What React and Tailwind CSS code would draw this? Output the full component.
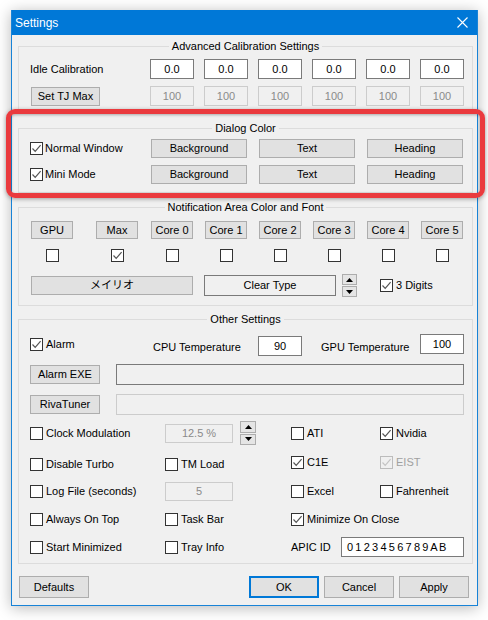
import React from "react";

const font = { fontFamily: '"Liberation Sans", "Noto Sans CJK JP", Arial, sans-serif' };

const Check = ({ checked, disabled }) => (
  <span
    className={`flex h-[13px] w-[13px] shrink-0 items-center justify-center border ${
      disabled ? "border-[#bcbcbc] bg-[#f0f0f0]" : "border-[#333333] bg-white"
    }`}
  >
    {checked && (
      <svg width="11" height="11" viewBox="0 0 11 11">
        <path
          d="M1.5 5.5 L4.2 8.3 L9.6 2.2"
          fill="none"
          stroke={disabled ? "#c4c4c4" : "#555555"}
          strokeWidth="1.2"
        />
      </svg>
    )}
  </span>
);

const CheckLabel = ({ label, checked, disabled, gap = "gap-[3px]" }) => (
  <div className={`flex items-center ${gap}`}>
    <Check checked={checked} disabled={disabled} />
    <span className={disabled ? "text-[#a0a0a0]" : "text-black"}>{label}</span>
  </div>
);

const Btn = ({ children, className = "" }) => (
  <div
    className={`flex items-center justify-center border border-[#adadad] bg-[#e1e1e1] text-black ${className}`}
  >
    {children}
  </div>
);

const Field = ({ children, className = "", disabled }) => (
  <div
    className={`flex items-center justify-center border ${
      disabled
        ? "border-[#cccccc] bg-[#f0f0f0] text-[#8a8a8a]"
        : "border-[#7a7a7a] bg-white text-black"
    } ${className}`}
  >
    {children}
  </div>
);

const Spinner = ({ className = "" }) => (
  <div className={`flex flex-col gap-px ${className}`}>
    <div className="flex flex-1 items-center justify-center border border-[#adadad] bg-[#e5e5e5]">
      <svg width="7" height="4" viewBox="0 0 7 4">
        <path d="M0 4 L3.5 0 L7 4 Z" fill="#000" />
      </svg>
    </div>
    <div className="flex flex-1 items-center justify-center border border-[#adadad] bg-[#e5e5e5]">
      <svg width="7" height="4" viewBox="0 0 7 4">
        <path d="M0 0 L3.5 4 L7 0 Z" fill="#000" />
      </svg>
    </div>
  </div>
);

const Group = ({ title, className = "", children }) => (
  <fieldset
    className={`ml-[6px] w-[455px] border border-[#dcdcdc] ${className}`}
  >
    <legend className="mx-auto px-[3px] leading-[14px] text-black">{title}</legend>
    {children}
  </fieldset>
);

export default function App() {
  const cores = ["Core 0", "Core 1", "Core 2", "Core 3", "Core 4", "Core 5"];
  const boxes = [false, true, false, false, false, false, false, false];

  return (
    <div className="min-h-screen bg-white pl-[11px] pt-[10px] text-[11px]" style={font}>
      <div className="relative h-[596px] w-[467px] border border-[#1883d7] bg-[#f0f0f0] shadow-[0_2px_14px_rgba(0,0,0,0.28)]">
        {/* title bar */}
        <div className="flex h-[25px] items-center justify-between bg-[#0078d7] pl-[3px] pr-[9px] -mt-px">
          <span className="text-[12px] text-white">Settings</span>
          <svg width="11" height="11" viewBox="0 0 11 11">
            <path d="M0.5 0.5 L10.5 10.5 M10.5 0.5 L0.5 10.5" stroke="#fff" strokeWidth="1.1" />
          </svg>
        </div>

        {/* Advanced Calibration Settings */}
        <Group title="Advanced Calibration Settings" className="mt-[4px] h-[75px]">
          <div className="mt-[6px] flex items-center pl-[11px]">
            <span className="w-[120px]">Idle Calibration</span>
            <div className="flex gap-[10px]">
              {[0, 1, 2, 3, 4, 5].map((i) => (
                <Field key={i} className="h-[20px] w-[44px]">
                  0.0
                </Field>
              ))}
            </div>
          </div>
          <div className="mt-[7px] flex items-center pl-[12px]">
            <Btn className="h-[19px] w-[69px]">Set TJ Max</Btn>
            <div className="ml-[50px] flex gap-[10px]">
              {[0, 1, 2, 3, 4, 5].map((i) => (
                <Field key={i} disabled className="h-[20px] w-[44px]">
                  100
                </Field>
              ))}
            </div>
          </div>
        </Group>

        {/* Dialog Color */}
        <Group title="Dialog Color" className="mt-[7px] h-[72px]">
          {["Normal Window", "Mini Mode"].map((label, r) => (
            <div
              key={label}
              className={`flex items-center pl-[11px] ${r === 0 ? "mt-[4px]" : "mt-[7px]"}`}
            >
              <div className="w-[121px]">
                <CheckLabel label={label} checked gap="gap-[2px]" />
              </div>
              <div className="flex gap-[12px]">
                <Btn className="h-[19px] w-[96px]">Background</Btn>
                <Btn className="h-[19px] w-[96px]">Text</Btn>
                <Btn className="h-[19px] w-[96px]">Heading</Btn>
              </div>
            </div>
          ))}
        </Group>

        {/* Notification Area */}
        <Group title="Notification Area Color and Font" className="mt-[7px] h-[106px]">
          <div className="mt-[7px] flex pl-[12px]">
            <Btn className="h-[18px] w-[42px]">GPU</Btn>
            <Btn className="ml-[23px] h-[18px] w-[42px]">Max</Btn>
            <div className="ml-[13px] flex gap-[12px]">
              {cores.map((c) => (
                <Btn key={c} className="h-[18px] w-[42px]">
                  {c}
                </Btn>
              ))}
            </div>
          </div>
          <div className="mt-[10px] flex pl-[12px]">
            {boxes.map((b, i) => (
              <div
                key={i}
                className={`flex w-[42px] justify-center ${
                  i === 1 ? "ml-[23px]" : i === 2 ? "ml-[13px]" : i > 2 ? "ml-[12px]" : ""
                }`}
              >
                <Check checked={b} />
              </div>
            ))}
          </div>
          <div className="mt-[12px] flex items-center pl-[12px]">
            <Btn className="h-[19px] w-[162px]">メイリオ</Btn>
            <div className="ml-[11px] flex h-[21px] w-[132px] items-center justify-center border border-[#7a7a7a] bg-[#f0f0f0]">
              Clear Type
            </div>
            <Spinner className="ml-[6px] h-[23px] w-[15px]" />
            <div className="ml-[23px]">
              <CheckLabel label="3 Digits" checked />
            </div>
          </div>
        </Group>

        {/* Other Settings */}
        <Group title="Other Settings" className="mt-[6px] h-[252px]">
          <div className="mt-[8px] flex items-start pl-[11px]">
            <div className="mt-[2px] w-[123px]">
              <CheckLabel label="Alarm" checked />
            </div>
            <span className="mt-[5px] w-[105px]">CPU Temperature</span>
            <Field className="mt-[2px] h-[20px] w-[44px]">90</Field>
            <span className="ml-[19px] mt-[5px] w-[99px]">GPU Temperature</span>
            <Field className="h-[20px] w-[44px]">100</Field>
          </div>
          <div className="mt-[8px] flex items-center pl-[11px]">
            <Btn className="h-[19px] w-[70px]">Alarm EXE</Btn>
            <div className="ml-[16px] h-[21px] w-[348px] border border-[#7a7a7a] bg-[#f0f0f0]" />
          </div>
          <div className="mt-[9px] flex items-center pl-[11px]">
            <Btn className="h-[19px] w-[70px]">RivaTuner</Btn>
            <div className="ml-[16px] h-[21px] w-[348px] border border-[#cccccc] bg-[#f0f0f0]" />
          </div>

          {/* Clock Modulation row */}
          <div className="mt-[6px] flex h-[24px] items-center pl-[11px]">
            <div className="w-[135px]">
              <CheckLabel label="Clock Modulation" />
            </div>
            <Field disabled className="h-[19px] w-[68px]">
              12.5 %
            </Field>
            <Spinner className="ml-[7px] h-[24px] w-[16px]" />
            <div className="ml-[35px] w-[89px]">
              <CheckLabel label="ATI" />
            </div>
            <CheckLabel label="Nvidia" checked />
          </div>

          <div className="mt-[9px] flex h-[20px] items-center pl-[11px]">
            <div className="w-[135px]">
              <CheckLabel label="Disable Turbo" />
            </div>
            <div className="w-[126px]">
              <CheckLabel label="TM Load" />
            </div>
            <div className="mb-[3px] w-[89px]">
              <CheckLabel label="C1E" checked />
            </div>
            <div className="mb-[3px]">
              <CheckLabel label="EIST" checked disabled />
            </div>
          </div>

          <div className="mt-[7px] flex h-[20px] items-center pl-[11px]">
            <div className="w-[135px]">
              <CheckLabel label="Log File (seconds)" />
            </div>
            <div className="w-[126px]">
              <Field disabled className="h-[19px] w-[68px]">
                5
              </Field>
            </div>
            <div className="w-[89px]">
              <CheckLabel label="Excel" />
            </div>
            <CheckLabel label="Fahrenheit" />
          </div>

          <div className="mt-[8px] flex h-[20px] items-center pl-[11px]">
            <div className="w-[135px]">
              <CheckLabel label="Always On Top" />
            </div>
            <div className="w-[126px]">
              <CheckLabel label="Task Bar" />
            </div>
            <CheckLabel label="Minimize On Close" checked />
          </div>

          <div className="mt-[8px] flex h-[20px] items-center pl-[11px]">
            <div className="w-[135px]">
              <CheckLabel label="Start Minimized" />
            </div>
            <div className="w-[126px]">
              <CheckLabel label="Tray Info" />
            </div>
            <span className="w-[50px]">APIC ID</span>
            <div className="flex h-[20px] w-[123px] items-center whitespace-nowrap border border-[#7a7a7a] bg-white pl-[5px] tracking-[-0.4px]">
              0 1 2 3 4 5 6 7 8 9 A B
            </div>
          </div>
        </Group>

        {/* bottom buttons */}
        <div className="mt-[12px] flex pl-[7px] pr-[8px]">
          <Btn className="h-[22px] w-[70px]">Defaults</Btn>
          <div className="ml-auto flex gap-[5px]">
            <div className="flex h-[22px] w-[70px] items-center justify-center border-2 border-[#0078d7] bg-[#e1e1e1]">
              OK
            </div>
            <Btn className="h-[22px] w-[70px]">Cancel</Btn>
            <Btn className="h-[22px] w-[70px]">Apply</Btn>
          </div>
        </div>

        {/* highlight overlay */}
        <div className="pointer-events-none absolute left-[-6px] top-[98px] h-[89px] w-[479px] rounded-[9px] border-[5px] border-[#ea3a3e] shadow-[0_1px_4px_rgba(0,0,0,0.35),inset_0_1px_3px_rgba(0,0,0,0.3)]" />
      </div>
    </div>
  );
}
